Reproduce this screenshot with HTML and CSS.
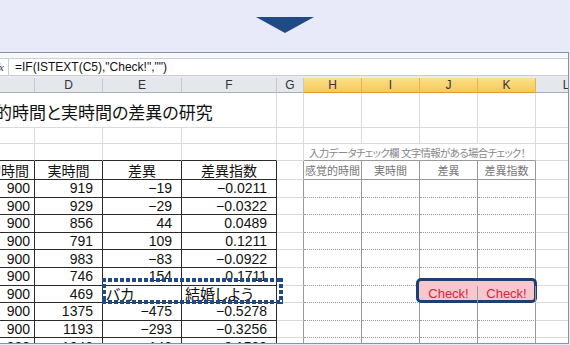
FILE: index.html
```html
<!DOCTYPE html>
<html lang="ja">
<head>
<meta charset="utf-8">
<title>Sheet</title>
<link rel="stylesheet" href="styles.css">
</head>
<body>
<div class="top">
  <svg class="arrow" width="58" height="16" viewBox="0 0 58 16"><polygon points="0,0 58,0 29,16" fill="#1f4a85"/></svg>
</div>
<div class="frame">
  <div class="strip"></div>
  <div class="fbar"><span class="fx">fx</span><span class="formula">=IF(ISTEXT(C5),"Check!","")</span></div>
  <div class="gap"></div>
  <div class="sheet">
    <!-- column headers -->
    <div class="h"></div><div class="h">D</div><div class="h">E</div><div class="h">F</div><div class="h">G</div>
    <div class="h sel">H</div><div class="h sel">I</div><div class="h sel">J</div><div class="h sel">K</div><div class="h L">L</div>
    <!-- title row -->
    <div class="c title">的時間と実時間の差異の研究</div><div class="c"></div><div class="c"></div><div class="c"></div><div class="c"></div><div class="c"></div><div class="c L"></div>
    <!-- empty row -->
    <div class="c"></div><div class="c"></div><div class="c"></div><div class="c"></div><div class="c"></div><div class="c"></div><div class="c"></div><div class="c"></div><div class="c"></div><div class="c L"></div>
    <!-- caption row -->
    <div class="c tt"></div><div class="c tt"></div><div class="c tt"></div><div class="c tt"></div><div class="c"></div>
    <div class="c cap rt">入力データチェック欄&nbsp;文字情報がある場合チェック！</div><div class="c L"></div>
    <!-- table header -->
    <div class="c t cl"><span>感覚的時間</span></div><div class="c t ctr">実時間</div><div class="c t ctr">差異</div><div class="c t ctr">差異指数</div><div class="c g"></div>
    <div class="c rh">感覚的時間</div><div class="c rh">実時間</div><div class="c rh">差異</div><div class="c rh">差異指数</div><div class="c L"></div>
    <!-- data -->
    <div class="c t n cc">900</div><div class="c t n">919</div><div class="c t n">−19</div><div class="c t n">−0.0211</div><div class="c g"></div>
    <div class="c rd"></div><div class="c rd"></div><div class="c rd"></div><div class="c rd"></div><div class="c L"></div>

    <div class="c t n cc">900</div><div class="c t n">929</div><div class="c t n">−29</div><div class="c t n">−0.0322</div><div class="c g"></div>
    <div class="c rd"></div><div class="c rd"></div><div class="c rd"></div><div class="c rd"></div><div class="c L"></div>

    <div class="c t n cc">900</div><div class="c t n">856</div><div class="c t n">44</div><div class="c t n">0.0489</div><div class="c g"></div>
    <div class="c rd"></div><div class="c rd"></div><div class="c rd"></div><div class="c rd"></div><div class="c L"></div>

    <div class="c t n cc">900</div><div class="c t n">791</div><div class="c t n">109</div><div class="c t n">0.1211</div><div class="c g"></div>
    <div class="c rd"></div><div class="c rd"></div><div class="c rd"></div><div class="c rd"></div><div class="c L"></div>

    <div class="c t n cc">900</div><div class="c t n">983</div><div class="c t n">−83</div><div class="c t n">−0.0922</div><div class="c g"></div>
    <div class="c rd"></div><div class="c rd"></div><div class="c rd"></div><div class="c rd"></div><div class="c L"></div>

    <div class="c t n cc">900</div><div class="c t n">746</div><div class="c t n">154</div><div class="c t n">0.1711</div><div class="c g"></div>
    <div class="c rd"></div><div class="c rd"></div><div class="c rd"></div><div class="c rd"></div><div class="c L"></div>

    <div class="c t n cc">900</div><div class="c t n">469</div><div class="c t txt">バカ</div><div class="c t txt">結婚しよう</div><div class="c g"></div>
    <div class="c rd"></div><div class="c rd"></div><div class="c rd chk">Check!</div><div class="c rd chk">Check!</div><div class="c L"></div>

    <div class="c t n cc">900</div><div class="c t n">1375</div><div class="c t n">−475</div><div class="c t n">−0.5278</div><div class="c g"></div>
    <div class="c rd"></div><div class="c rd"></div><div class="c rd"></div><div class="c rd"></div><div class="c L"></div>

    <div class="c t n cc">900</div><div class="c t n">1193</div><div class="c t n">−293</div><div class="c t n">−0.3256</div><div class="c g"></div>
    <div class="c rd"></div><div class="c rd"></div><div class="c rd"></div><div class="c rd"></div><div class="c L"></div>

    <div class="c t n cc">900</div><div class="c t n">1043</div><div class="c t n">−143</div><div class="c t n">−0.1589</div><div class="c g"></div>
    <div class="c rd"></div><div class="c rd"></div><div class="c rd"></div><div class="c rd"></div><div class="c L"></div>

    <div class="cbox"></div>
    <div class="selbox"></div>
  </div>
</div>
</body>
</html>
```
FILE: styles.css
```css
html, body {
  margin: 0;
  padding: 0;
}
body {
  width: 570px;
  height: 345px;
  overflow: hidden;
  background: #e8eaf9;
  font-family: "Liberation Sans", "Noto Sans CJK JP", sans-serif;
  color: #111;
}
.top {
  height: 52px;
  box-sizing: border-box;
  padding-top: 17px;
  display: flex;
  justify-content: center;
}
.arrow {
  display: block;
}
.frame {
  width: 568px;
  height: 290px;
  border-top: 1px solid #8c8fae;
  border-bottom: 1px solid #8c8fae;
  border-right: 1px solid #8c8fae;
  background: #fff;
  overflow: hidden;
  display: flex;
  flex-direction: column;
}
.strip {
  flex: none;
  height: 5px;
  background: #f7f8fa;
  border-bottom: 1px solid #cdd0d6;
}
.fbar {
  flex: none;
  height: 16px;
  background: #fff;
  border-bottom: 1px solid #c9ccd3;
  display: flex;
  align-items: center;
}
.fx {
  width: 9px;
  height: 100%;
  box-sizing: border-box;
  border-right: 1px solid #c9ccd3;
  display: flex;
  justify-content: flex-end;
  align-items: center;
  padding-right: 4px;
  overflow: hidden;
  font-family: "Liberation Serif", serif;
  font-style: italic;
  font-size: 11px;
  color: #333;
}
.formula {
  padding-left: 6px;
  font-size: 12px;
  color: #111;
  white-space: nowrap;
}
.gap {
  flex: none;
  height: 2px;
  background: #e9ebef;
}
.sheet {
  flex: none;
  position: relative;
  display: grid;
  grid-template-columns: 35px 68px 79px 95px 27px 58px 58px 58px 58px 60px;
  grid-template-rows: 15px 35px 16px 17px 19px repeat(10, 17.6px);
}
.h {
  box-sizing: border-box;
  background: #e4e7eb;
  border-right: 1px solid #c5c8ce;
  border-bottom: 1px solid #a9adb5;
  display: flex;
  align-items: center;
  justify-content: center;
  font-size: 12px;
  color: #333;
}
.h.sel {
  background: linear-gradient(#fbe08e, #f7c954);
  border-right-color: #e6b254;
  border-bottom-color: #e39a2c;
}
.c {
  box-sizing: border-box;
  min-width: 0;
  border-right: 1px solid #dadada;
  border-bottom: 1px solid #dadada;
  overflow: hidden;
  white-space: nowrap;
  display: flex;
  align-items: center;
  font-size: 14px;
}
.L {
  border-right: none;
}
.title {
  grid-column: 1 / 5;
  font-size: 17px;
  text-indent: -5px;
  padding-top: 3px;
  font-feature-settings: "palt";
}
.tt {
  border-bottom-color: #2a2a2a;
}
.t {
  border-right-color: #2a2a2a;
  border-bottom-color: #2a2a2a;
}
.ctr {
  justify-content: center;
  font-feature-settings: "palt";
}
.cl {
  justify-content: flex-end;
  padding-right: 5px;
  font-feature-settings: "palt";
}
.n {
  justify-content: flex-end;
  padding-right: 9px;
}
.cc {
  padding-right: 4px;
}
.txt {
  padding-left: 3px;
  font-size: 15px;
  font-feature-settings: "palt";
}
.g {
  border-right-color: #999;
}
.cap {
  grid-column: 6 / 10;
  font-size: 10.5px;
  letter-spacing: -0.7px;
  color: #888;
  padding-left: 5px;
  font-feature-settings: "palt";
}
.rt {
  border-bottom-color: #999;
}
.rh {
  border-right-color: #999;
  border-bottom-color: #999;
  justify-content: center;
  font-size: 11px;
  color: #777;
  font-feature-settings: "palt";
}
.rd {
  border-right-color: #999;
  border-bottom: 1px dotted #999;
}
.chk {
  position: relative;
  z-index: 1;
  justify-content: center;
  font-size: 13px;
  color: #d0283c;
  border-bottom-color: transparent;
}
.cbox {
  position: absolute;
  left: 416px;
  top: 200px;
  width: 121px;
  height: 25px;
  box-sizing: border-box;
  border: 3px solid #1e3f74;
  border-radius: 5px;
  background: #f8c6cd;
  z-index: 0;
}
.selbox {
  position: absolute;
  left: 102px;
  top: 200px;
  width: 181px;
  height: 26px;
  z-index: 2;
  background:
    repeating-linear-gradient(90deg, #1f4a85 0 4px, transparent 4px 6px) left top / 100% 4px no-repeat,
    repeating-linear-gradient(90deg, #1f4a85 0 4px, transparent 4px 6px) left bottom / 100% 4px no-repeat,
    repeating-linear-gradient(180deg, #1f4a85 0 4px, transparent 4px 6px) left top / 4px 100% no-repeat,
    repeating-linear-gradient(180deg, #1f4a85 0 4px, transparent 4px 6px) right top / 4px 100% no-repeat;
}
```
